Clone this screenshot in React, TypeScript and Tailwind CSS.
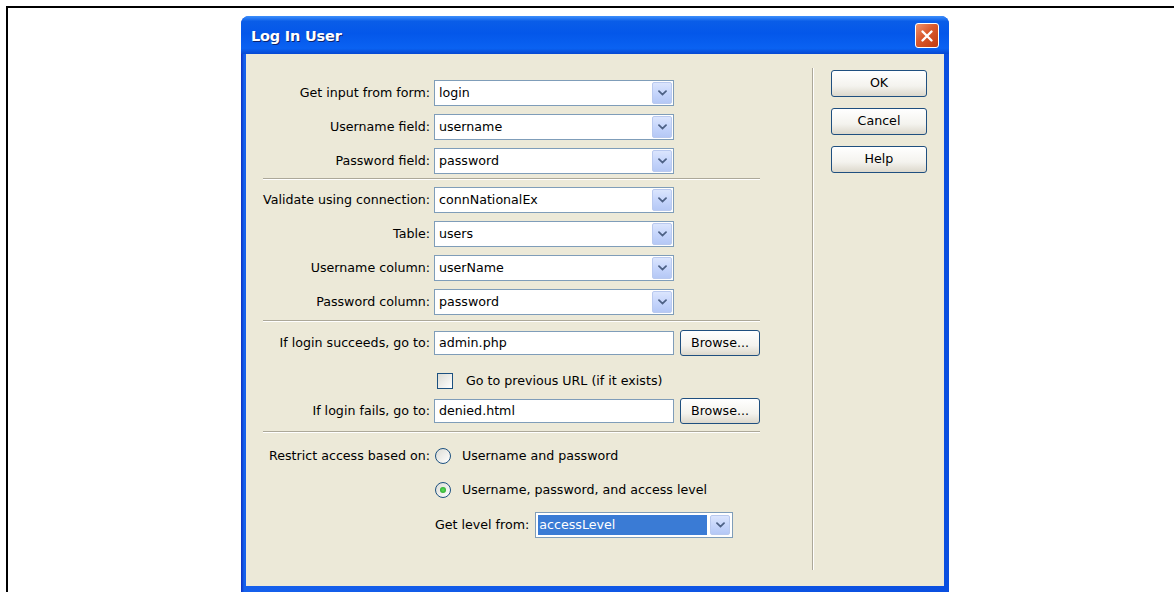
import type { ReactNode } from 'react';

type FieldRow = { label: string; value: string };

const FORM_ROWS: FieldRow[] = [
  { label: 'Get input from form:', value: 'login' },
  { label: 'Username field:', value: 'username' },
  { label: 'Password field:', value: 'password' },
];

const DB_ROWS: FieldRow[] = [
  { label: 'Validate using connection:', value: 'connNationalEx' },
  { label: 'Table:', value: 'users' },
  { label: 'Username column:', value: 'userName' },
  { label: 'Password column:', value: 'password' },
];

function Chevron() {
  return (
    <svg width="9" height="6" viewBox="0 0 9 6" fill="none">
      <path d="M1 1.2 L4.5 4.6 L8 1.2" stroke="#4d6185" strokeWidth="1.8" strokeLinecap="round" />
    </svg>
  );
}

function ArrowButton() {
  return (
    <span className="flex h-full w-[20px] items-center justify-center rounded-[2px] border border-[#b9c9ef] bg-[linear-gradient(to_bottom,#dbe5fd,#c4d4fb_55%,#b5c8f5)]">
      <Chevron />
    </span>
  );
}

function Select({ value, width = 'w-[240px]' }: { value: string; width?: string }) {
  return (
    <div className={`flex h-[26px] ${width} items-stretch border border-[#7f9db9] bg-white p-[1px]`}>
      <span className="flex flex-1 items-center pl-[3px] text-black">{value}</span>
      <ArrowButton />
    </div>
  );
}

function TextInput({ value }: { value: string }) {
  return (
    <div className="flex h-[24px] w-[240px] items-center border border-[#7f9db9] bg-white pl-[4px]">
      {value}
    </div>
  );
}

function XpButton({ children, className = '' }: { children: ReactNode; className?: string }) {
  return (
    <button
      className={`flex items-center justify-center rounded-[3px] border border-[#1f4f7f] bg-[linear-gradient(to_bottom,#ffffff,#f4f3ee_60%,#dcd8cc)] text-black ${className}`}
    >
      {children}
    </button>
  );
}

function Row({ label, children }: { label: string; children: ReactNode }) {
  return (
    <div className="flex h-[26px] items-center">
      <span className="w-[184px] whitespace-nowrap text-right">{label}</span>
      <div className="ml-[4px] flex items-center">{children}</div>
    </div>
  );
}

function HSeparator({ className = '' }: { className?: string }) {
  return <div className={`ml-[17px] h-[2px] w-[497px] border-t border-b border-t-[#aca899] border-b-white ${className}`} />;
}

function Radio({ checked }: { checked?: boolean }) {
  return (
    <span className="flex h-[16px] w-[16px] items-center justify-center rounded-full border border-[#1c5180] bg-[linear-gradient(135deg,#dcdcd5,#ffffff)]">
      {checked && <span className="h-[6px] w-[6px] rounded-full bg-[radial-gradient(circle,#5ee05e,#1f9a1f)]" />}
    </span>
  );
}

export default function App() {
  return (
    <div className="h-[592px] w-full overflow-hidden bg-white pl-[6px] pt-[6px] font-['DejaVu_Sans',sans-serif] text-[12.65px] text-black">
      <div className="h-full border-l-2 border-t-2 border-black pl-[233px] pt-[8px]">
        {/* dialog window */}
        <div className="flex h-[576px] w-[708px] flex-col overflow-hidden rounded-t-[8px] bg-[linear-gradient(to_right,#0a2fc0,#1560ec_3px,#0a4fe0)]">
          <div className="flex h-[38px] shrink-0 items-center justify-between bg-[linear-gradient(to_bottom,#3d8ffb_0%,#0a5de8_14%,#0457ea_45%,#0a62f2_85%,#0648d2_100%)] pl-[10px] pr-[10px]">
            <span className="pt-[4px] font-['DejaVu_Sans',sans-serif] text-[14.5px] font-bold tracking-[-0.2px] text-white [text-shadow:1px_1px_0_#0a2470]">
              Log In User
            </span>
            <span className="mt-[1px] flex h-[25px] w-[24px] items-center justify-center rounded-[3px] border border-white bg-[linear-gradient(135deg,#f0936c,#d9582c_45%,#c03a10)]">
              <svg width="14" height="14" viewBox="0 0 14 14">
                <path d="M2.5 2.5 L11.5 11.5 M11.5 2.5 L2.5 11.5" stroke="white" strokeWidth="2.4" strokeLinecap="round" />
              </svg>
            </span>
          </div>

          <div className="mx-[5px] mb-[6px] flex flex-1 bg-[#ece9d8]">
            {/* fields */}
            <div className="flex w-[514px] flex-col pt-[26px]">
              <div className="flex flex-col gap-[8px]">
                {FORM_ROWS.map((r) => (
                  <Row key={r.label} label={r.label}>
                    <Select value={r.value} />
                  </Row>
                ))}
              </div>
              <HSeparator className="mt-[4px]" />
              <div className="mt-[7px] flex flex-col gap-[8px]">
                {DB_ROWS.map((r) => (
                  <Row key={r.label} label={r.label}>
                    <Select value={r.value} />
                  </Row>
                ))}
              </div>
              <HSeparator className="mt-[5px]" />

              <div className="mt-[8px]">
                <Row label="If login succeeds, go to:">
                  <TextInput value="admin.php" />
                  <XpButton className="ml-[6px] h-[26px] w-[80px]">Browse...</XpButton>
                </Row>
              </div>
              <div className="mt-[14px] flex h-[22px] items-center pl-[191px]">
                <span className="h-[16px] w-[16px] border border-[#1c5180] bg-[linear-gradient(135deg,#dcdcd5,#ffffff)]" />
                <span className="ml-[13px]">Go to previous URL (if it exists)</span>
              </div>
              <div className="mt-[6px]">
                <Row label="If login fails, go to:">
                  <TextInput value="denied.html" />
                  <XpButton className="ml-[6px] h-[26px] w-[80px]">Browse...</XpButton>
                </Row>
              </div>
              <HSeparator className="mt-[7px]" />

              <div className="mt-[13px] flex h-[20px] items-center">
                <span className="w-[184px] whitespace-nowrap text-right">Restrict access based on:</span>
                <span className="ml-[5px]">
                  <Radio />
                </span>
                <span className="ml-[11px]">Username and password</span>
              </div>
              <div className="mt-[14px] flex h-[20px] items-center pl-[189px]">
                <Radio checked />
                <span className="ml-[11px]">Username, password, and access level</span>
              </div>
              <div className="mt-[12px] flex h-[26px] items-center pl-[189px]">
                <span>Get level from:</span>
                <div className="ml-[6px] flex h-[26px] w-[198px] items-stretch border border-[#7f9db9] bg-white p-[2px]">
                  <span className="flex flex-1 items-center bg-[#3a7bd5] pl-[1px] text-white">accessLevel</span>
                  <span className="ml-[3px] flex">
                    <ArrowButton />
                  </span>
                </div>
              </div>
            </div>

            {/* vertical divider */}
            <div className="mb-[16px] ml-[52px] mt-[14px] w-[2px] border-l border-r border-l-[#aca899] border-r-white" />

            {/* action buttons */}
            <div className="ml-[17px] flex flex-col gap-[11px] pt-[16px]">
              <XpButton className="h-[27px] w-[96px]">OK</XpButton>
              <XpButton className="h-[27px] w-[96px]">Cancel</XpButton>
              <XpButton className="h-[27px] w-[96px]">Help</XpButton>
            </div>
          </div>
        </div>
      </div>
    </div>
  );
}
